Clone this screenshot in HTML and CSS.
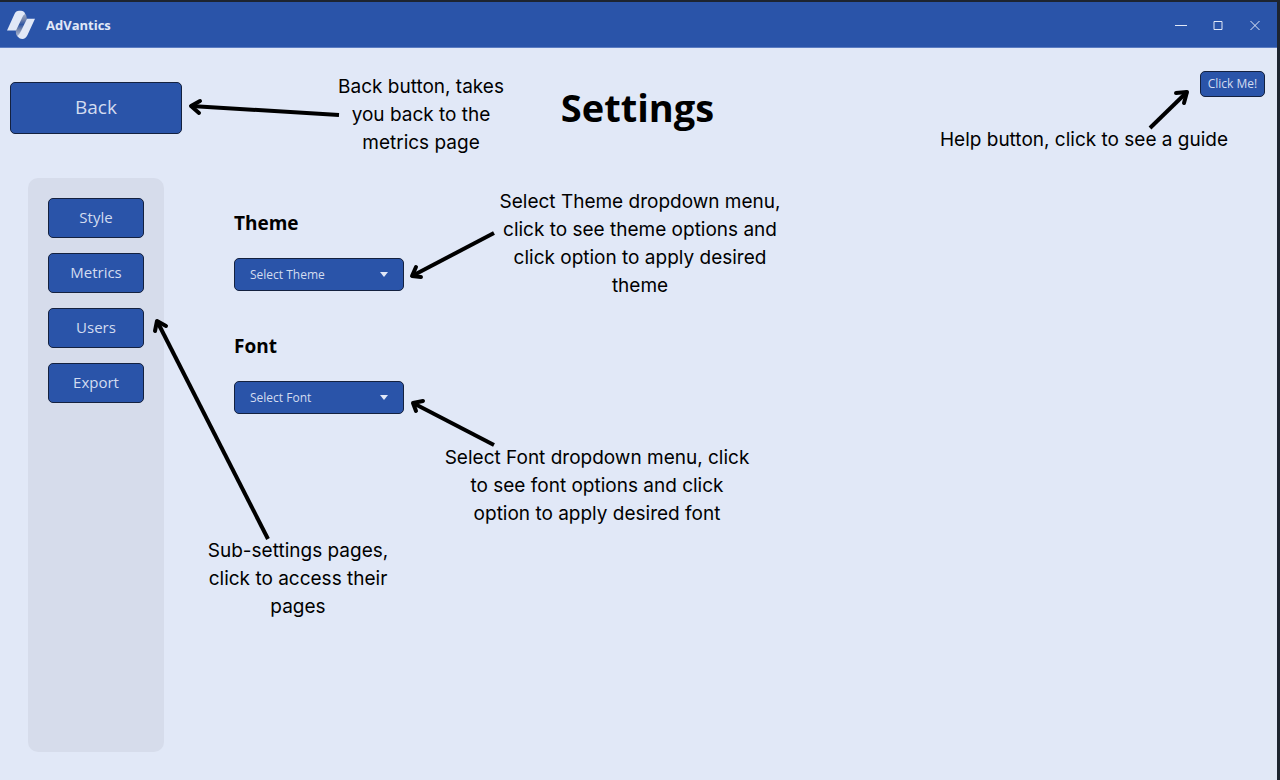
FILE: index.html
```html
<!DOCTYPE html>
<html lang="en">
<head>
<meta charset="utf-8">
<meta name="viewport" content="width=device-width, initial-scale=1">
<title>AdVantics</title>
<link rel="stylesheet" href="styles.css">
</head>
<body>
<div class="window">
  <header class="titlebar">
    <svg class="logo" viewBox="0 0 28 30" aria-hidden="true">
      <defs>
        <linearGradient id="fold" x1="0" y1="0" x2="0" y2="1">
          <stop offset="0" stop-color="#a9b5d0"/><stop offset=".3" stop-color="#7485ac"/><stop offset=".5" stop-color="#2f56a4"/><stop offset=".7" stop-color="#7485ac"/><stop offset="1" stop-color="#b4bfd8"/>
        </linearGradient>
      </defs>
      <path d="M17 2Q20 5 20 9L15 20L11 27Q8 24 9 19L14 8Z" fill="url(#fold)"/>
      <path d="M0 20.500L7.500 4Q9 .7 12 .7H14Q17 .7 18 4Q16 5 15 8L9 20.500Z" fill="#e1e8f7"/>
      <path d="M28 8.700L20.500 25Q18.500 29 15.500 29Q12 29 10.500 26Q12.500 24 14 21L20 8.700Z" fill="#e1e8f7"/>
    </svg>
    <span class="app-name">AdVantics</span>
    <div class="window-controls">
      <button class="control" aria-label="Minimize"><svg viewBox="0 0 12 12"><path d="M0 6.500H12"/></svg></button>
      <button class="control" aria-label="Maximize"><svg viewBox="0 0 12 12"><path d="M2 2.500H10V10.500H2Z"/></svg></button>
      <button class="control" aria-label="Close"><svg viewBox="0 0 12 12"><path d="M1.500 2L10.500 11M10.500 2L1.500 11"/></svg></button>
    </div>
  </header>

  <div class="page-head">
    <button class="btn btn-back">Back</button>
    <h1 class="page-title">Settings</h1>
    <button class="btn btn-help">Click Me!</button>
  </div>

  <div class="page-body">
    <nav class="sidebar" aria-label="Settings pages">
      <button class="btn btn-nav">Style</button>
      <button class="btn btn-nav">Metrics</button>
      <button class="btn btn-nav">Users</button>
      <button class="btn btn-nav">Export</button>
    </nav>
    <main class="options">
      <div class="field">
        <label class="field-label" for="theme">Theme</label>
        <div class="select-wrap">
          <select class="select" id="theme"><option>Select Theme</option></select>
        </div>
      </div>
      <div class="field">
        <label class="field-label" for="font">Font</label>
        <div class="select-wrap">
          <select class="select" id="font"><option>Select Font</option></select>
        </div>
      </div>
    </main>
  </div>
</div>

<svg class="arrows" width="1280" height="780" viewBox="0 0 1280 780" aria-hidden="true">
  <path d="M339 115L191 106"/><path class="head" d="M200 101L191 106L199 113"/>
  <path d="M1150 128L1187 92"/><path class="head" d="M1176 93L1187 92L1184 103"/>
  <path d="M494 233L412 276"/><path class="head" d="M416 267L412 276L421 277"/>
  <path d="M494 445L413 403"/><path class="head" d="M423 401L413 403L416 411"/>
  <path d="M268 539L157 321"/><path class="head" d="M155 331L157 321L166 326"/>
</svg>
<p class="note note-back">Back button, takes<br>you back to the<br>metrics page</p>
<p class="note note-help">Help button, click to see a guide</p>
<p class="note note-theme">Select Theme dropdown menu,<br>click to see theme options and<br>click option to apply desired<br>theme</p>
<p class="note note-font">Select Font dropdown menu, click<br>to see font options and click<br>option to apply desired font</p>
<p class="note note-nav">Sub-settings pages,<br>click to access their<br>pages</p>
</body>
</html>
```
FILE: styles.css
```css
* { box-sizing: border-box; }

body {
  margin: 0;
  position: relative;
  background: #e1e8f7;
  color: #000;
  font-family: "Open Sans", "Noto Sans", sans-serif;
}

button, select { font-family: inherit; }

.window {
  display: flex;
  flex-direction: column;
  min-height: 100vh;
  border-top: 2px solid #1d2430;
  border-right: 3px solid #1d2430;
}

.titlebar {
  display: flex;
  align-items: center;
  height: 46px;
  padding: 0 12px 0 7px;
  background: #2a54a9;
  border-bottom: 1px solid #5b7cc2;
}

.logo { width: 28px; height: 30px; }

.app-name {
  margin-left: 11px;
  color: #e1e8f7;
  font-size: 13px;
  font-weight: 700;
}

.window-controls {
  display: flex;
  gap: 17px;
  margin-left: auto;
}

.control {
  width: 20px;
  height: 20px;
  padding: 4px;
  border: 0;
  background: none;
}

.control svg {
  display: block;
  width: 12px;
  height: 12px;
  fill: none;
  stroke: #e1e8f7;
}

.page-head {
  display: grid;
  grid-template-columns: 1fr auto 1fr;
  align-items: center;
  min-height: 97px;
  padding: 23px 12px 0 10px;
}

.btn {
  padding: 0 0 2px;
  border: 1px solid #14213f;
  border-radius: 5px;
  background: #2a54a9;
  color: #d3dcf0;
}

.btn-back {
  width: 172px;
  height: 52px;
  font-size: 19px;
}

.page-title {
  margin: 0;
  padding-bottom: 2px;
  font-size: 38px;
  line-height: 50px;
}

.btn-help {
  align-self: start;
  justify-self: end;
  width: 65px;
  height: 26px;
  font-size: 12px;
}

.page-body {
  display: flex;
  flex: 1;
  gap: 70px;
  padding: 33px 28px 28px;
}

.sidebar {
  display: flex;
  flex-direction: column;
  gap: 15px;
  padding: 20px;
  border-radius: 10px;
  background: #d6dceb;
}

.btn-nav {
  width: 96px;
  height: 40px;
  font-size: 15px;
}

.options {
  display: flex;
  flex-direction: column;
  gap: 40px;
  padding-top: 30px;
}

.field {
  display: flex;
  flex-direction: column;
  align-items: flex-start;
  gap: 20px;
}

.field-label {
  font-size: 19px;
  font-weight: 700;
  line-height: 30px;
}

.select-wrap { position: relative; }

.select-wrap::after {
  content: "";
  position: absolute;
  right: 16px;
  top: 14px;
  border: 4px solid transparent;
  border-top: 5px solid #e1e8f7;
  border-bottom: 0;
  pointer-events: none;
}

.select {
  display: block;
  width: 170px;
  height: 33px;
  padding: 0 15px;
  border: 1px solid #14213f;
  border-radius: 5px;
  background: #2a54a9;
  color: #d3dcf0;
  font-size: 12px;
  appearance: none;
}

.arrows {
  position: absolute;
  left: 0;
  top: 0;
  fill: none;
  stroke: #000;
  stroke-width: 4;
  pointer-events: none;
}

.arrows .head {
  stroke-linecap: round;
  stroke-linejoin: round;
}

.note {
  position: absolute;
  margin: 0;
  transform: translateX(-50%);
  font-family: Inter, sans-serif;
  font-size: 19px;
  line-height: 28px;
  text-align: center;
  white-space: nowrap;
}

.note-back { left: 421px; top: 73px; }
.note-help { left: 1084px; top: 126px; }
.note-theme { left: 640px; top: 188px; }
.note-font { left: 597px; top: 444px; }
.note-nav { left: 298px; top: 537px; }
```
